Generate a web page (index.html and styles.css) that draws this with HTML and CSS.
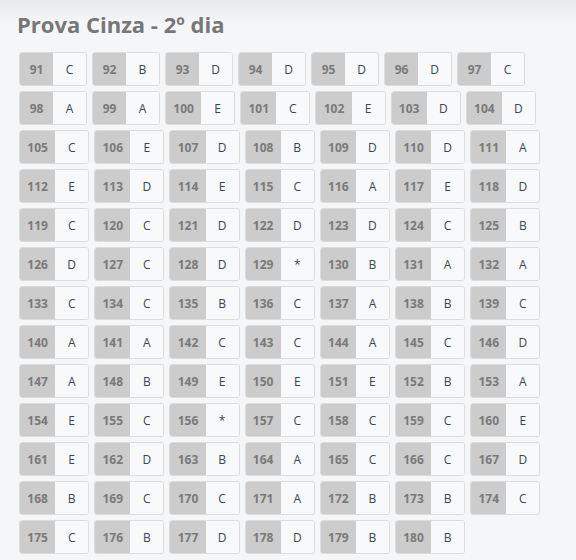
FILE: index.html
```html
<!DOCTYPE html>
<html lang="pt">
<head>
<meta charset="utf-8">
<title>Prova Cinza - 2º dia</title>
<link rel="stylesheet" href="styles.css">
</head>
<body>
<div class="page">
  <h1 class="title">Prova Cinza - 2º dia</h1>
  <div class="grid">
    <div class="q"><span class="n">91</span><span class="a">C</span></div>
    <div class="q"><span class="n">92</span><span class="a">B</span></div>
    <div class="q"><span class="n">93</span><span class="a">D</span></div>
    <div class="q"><span class="n">94</span><span class="a">D</span></div>
    <div class="q"><span class="n">95</span><span class="a">D</span></div>
    <div class="q"><span class="n">96</span><span class="a">D</span></div>
    <div class="q"><span class="n">97</span><span class="a">C</span></div>
    <div class="q"><span class="n">98</span><span class="a">A</span></div>
    <div class="q"><span class="n">99</span><span class="a">A</span></div>
    <div class="q"><span class="n">100</span><span class="a">E</span></div>
    <div class="q"><span class="n">101</span><span class="a">C</span></div>
    <div class="q"><span class="n">102</span><span class="a">E</span></div>
    <div class="q"><span class="n">103</span><span class="a">D</span></div>
    <div class="q"><span class="n">104</span><span class="a">D</span></div>
    <div class="q"><span class="n">105</span><span class="a">C</span></div>
    <div class="q"><span class="n">106</span><span class="a">E</span></div>
    <div class="q"><span class="n">107</span><span class="a">D</span></div>
    <div class="q"><span class="n">108</span><span class="a">B</span></div>
    <div class="q"><span class="n">109</span><span class="a">D</span></div>
    <div class="q"><span class="n">110</span><span class="a">D</span></div>
    <div class="q"><span class="n">111</span><span class="a">A</span></div>
    <div class="q"><span class="n">112</span><span class="a">E</span></div>
    <div class="q"><span class="n">113</span><span class="a">D</span></div>
    <div class="q"><span class="n">114</span><span class="a">E</span></div>
    <div class="q"><span class="n">115</span><span class="a">C</span></div>
    <div class="q"><span class="n">116</span><span class="a">A</span></div>
    <div class="q"><span class="n">117</span><span class="a">E</span></div>
    <div class="q"><span class="n">118</span><span class="a">D</span></div>
    <div class="q"><span class="n">119</span><span class="a">C</span></div>
    <div class="q"><span class="n">120</span><span class="a">C</span></div>
    <div class="q"><span class="n">121</span><span class="a">D</span></div>
    <div class="q"><span class="n">122</span><span class="a">D</span></div>
    <div class="q"><span class="n">123</span><span class="a">D</span></div>
    <div class="q"><span class="n">124</span><span class="a">C</span></div>
    <div class="q"><span class="n">125</span><span class="a">B</span></div>
    <div class="q"><span class="n">126</span><span class="a">D</span></div>
    <div class="q"><span class="n">127</span><span class="a">C</span></div>
    <div class="q"><span class="n">128</span><span class="a">D</span></div>
    <div class="q"><span class="n">129</span><span class="a">*</span></div>
    <div class="q"><span class="n">130</span><span class="a">B</span></div>
    <div class="q"><span class="n">131</span><span class="a">A</span></div>
    <div class="q"><span class="n">132</span><span class="a">A</span></div>
    <div class="q"><span class="n">133</span><span class="a">C</span></div>
    <div class="q"><span class="n">134</span><span class="a">C</span></div>
    <div class="q"><span class="n">135</span><span class="a">B</span></div>
    <div class="q"><span class="n">136</span><span class="a">C</span></div>
    <div class="q"><span class="n">137</span><span class="a">A</span></div>
    <div class="q"><span class="n">138</span><span class="a">B</span></div>
    <div class="q"><span class="n">139</span><span class="a">C</span></div>
    <div class="q"><span class="n">140</span><span class="a">A</span></div>
    <div class="q"><span class="n">141</span><span class="a">A</span></div>
    <div class="q"><span class="n">142</span><span class="a">C</span></div>
    <div class="q"><span class="n">143</span><span class="a">C</span></div>
    <div class="q"><span class="n">144</span><span class="a">A</span></div>
    <div class="q"><span class="n">145</span><span class="a">C</span></div>
    <div class="q"><span class="n">146</span><span class="a">D</span></div>
    <div class="q"><span class="n">147</span><span class="a">A</span></div>
    <div class="q"><span class="n">148</span><span class="a">B</span></div>
    <div class="q"><span class="n">149</span><span class="a">E</span></div>
    <div class="q"><span class="n">150</span><span class="a">E</span></div>
    <div class="q"><span class="n">151</span><span class="a">E</span></div>
    <div class="q"><span class="n">152</span><span class="a">B</span></div>
    <div class="q"><span class="n">153</span><span class="a">A</span></div>
    <div class="q"><span class="n">154</span><span class="a">E</span></div>
    <div class="q"><span class="n">155</span><span class="a">C</span></div>
    <div class="q"><span class="n">156</span><span class="a">*</span></div>
    <div class="q"><span class="n">157</span><span class="a">C</span></div>
    <div class="q"><span class="n">158</span><span class="a">C</span></div>
    <div class="q"><span class="n">159</span><span class="a">C</span></div>
    <div class="q"><span class="n">160</span><span class="a">E</span></div>
    <div class="q"><span class="n">161</span><span class="a">E</span></div>
    <div class="q"><span class="n">162</span><span class="a">D</span></div>
    <div class="q"><span class="n">163</span><span class="a">B</span></div>
    <div class="q"><span class="n">164</span><span class="a">A</span></div>
    <div class="q"><span class="n">165</span><span class="a">C</span></div>
    <div class="q"><span class="n">166</span><span class="a">C</span></div>
    <div class="q"><span class="n">167</span><span class="a">D</span></div>
    <div class="q"><span class="n">168</span><span class="a">B</span></div>
    <div class="q"><span class="n">169</span><span class="a">C</span></div>
    <div class="q"><span class="n">170</span><span class="a">C</span></div>
    <div class="q"><span class="n">171</span><span class="a">A</span></div>
    <div class="q"><span class="n">172</span><span class="a">B</span></div>
    <div class="q"><span class="n">173</span><span class="a">B</span></div>
    <div class="q"><span class="n">174</span><span class="a">C</span></div>
    <div class="q"><span class="n">175</span><span class="a">C</span></div>
    <div class="q"><span class="n">176</span><span class="a">B</span></div>
    <div class="q"><span class="n">177</span><span class="a">D</span></div>
    <div class="q"><span class="n">178</span><span class="a">D</span></div>
    <div class="q"><span class="n">179</span><span class="a">B</span></div>
    <div class="q"><span class="n">180</span><span class="a">B</span></div>
  </div>
</div>
</body>
</html>
```
FILE: styles.css
```css
html, body {
  margin: 0;
  padding: 0;
}
body {
  background: linear-gradient(#e8e9e9 0px, #f5f6f8 22px, #f5f6f8 100%);
  font-family: "Open Sans", "Liberation Sans", sans-serif;
  min-height: 560px;
}
.page {
  padding: 9px 16px 0 19px;
}
.title {
  margin: 0 0 13px -2px;
  font-size: 22px;
  line-height: 30px;
  font-weight: 700;
  color: #777;
}
.grid {
  display: flex;
  flex-wrap: wrap;
  gap: 5px 5px;
  width: 541px;
}
.q {
  display: flex;
  height: 34px;
  box-sizing: border-box;
  border: 1px solid #dcdcdc;
  border-radius: 3px;
  overflow: hidden;
  font-size: 12px;
}
.n {
  display: flex;
  align-items: center;
  justify-content: center;
  min-width: 33px;
  padding: 0 7.3px;
  box-sizing: border-box;
  background: #cccccc;
  color: #7a7a7a;
  font-weight: 700;
}
.a {
  display: flex;
  align-items: center;
  justify-content: center;
  width: 33px;
  background: #f8f9fa;
  color: #3c4450;
}
```
